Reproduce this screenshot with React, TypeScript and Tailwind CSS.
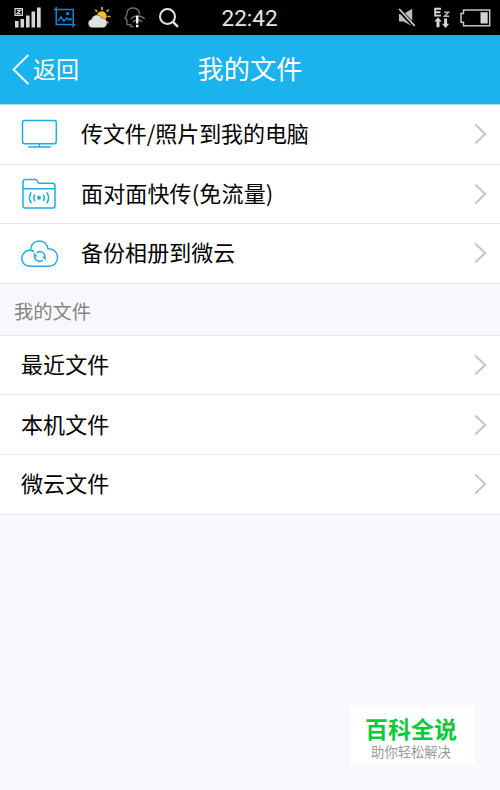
import React from 'react';

const ACCENT = '#1fabe3';

const SignalIcon = () => (
  <svg width="28" height="22" viewBox="0 0 28 22" fill="#d6d6d6">
    <path d="M1 1.6h7.4v6.8H1z" fill="none" stroke="#d6d6d6" strokeWidth="1.2" />
    <path d="M3 3.4h3.4L3 6.6h3.6" fill="none" stroke="#d6d6d6" strokeWidth="1.3" />
    <rect x="1" y="14" width="3.6" height="6.5" />
    <rect x="6.5" y="12" width="3.6" height="8.5" />
    <rect x="12" y="8.5" width="3.6" height="12" />
    <rect x="17.5" y="4.5" width="3.6" height="16" />
    <rect x="23" y="0.5" width="3.7" height="20" />
  </svg>
);

const ScreenshotIcon = () => (
  <svg width="22" height="22" viewBox="0 0 22 22" fill="none" stroke="#1387cf" strokeWidth="1.5">
    <path d="M2.2 0v17.4H21.5M0 2.5h19.2v18" />
    <path d="M4 13.7l3.2-3.8 2.6 4.2 3.2-3 1.8 1.7 1.8-1.3 1.2 1.6" />
    <circle cx="13.6" cy="6.6" r="1.7" fill="#1387cf" stroke="none" />
  </svg>
);

const WeatherIcon = () => (
  <svg width="24" height="22" viewBox="0 0 24 22">
    <g stroke="#e9b92f" strokeWidth="1.6">
      <path d="M14 0v3M7.3 2.7l2 2M20.7 2.7l-2.1 2M22.5 9.5h-3M20.4 16.2l-2-2" />
    </g>
    <circle cx="13.7" cy="9.3" r="5" fill="#f2be2b" />
    <path
      d="M4.4 20.8a4.3 4.3 0 0 1-.8-8.500 5.200 5.200 0 0 1 9.900-1.200 4.800 4.800 0 1 1 1.400 9.700z"
      fill="#e2e2e2"
      stroke="#000"
      strokeWidth="0.4"
    />
  </svg>
);

const HeadWifiIcon = () => (
  <svg width="24" height="22" viewBox="0 0 24 22" fill="none" stroke="#6e6e6e" strokeWidth="1.4">
    <path d="M15.5 7.5C15.3 3 12.3 1 9 1 5 1 2.9 3.3 2.9 6.8c0 1.5-.3 2.3-2 4.6l1.9 1v4.1c0 1.2.8 1.5 4 .9v2.2h3" />
    <path d="M6.8 12.2c3.2-4.2 10.8-4.2 13.8 0M9 15c2-2.6 7.3-2.6 9.3 0" />
    <path d="M13.2 8.8v7.8M13.2 17.8v2.4" stroke="#fff" strokeWidth="2.4" />
  </svg>
);

const SearchIcon = () => (
  <svg width="20" height="20" viewBox="0 0 20 20" fill="none" stroke="#e6e6e6" strokeWidth="2">
    <circle cx="8.5" cy="8.5" r="7.5" />
    <path d="M13.7 13.7l5.3 5.1" strokeWidth="2.4" />
  </svg>
);

const MuteIcon = () => (
  <svg width="18" height="20" viewBox="0 0 18 20" fill="#bdbdbd">
    <path d="M1 6h4.5L14.2 0.8v17.4L5.5 13.5H1z" />
    <path d="M0.5 1.3l16.2 17" stroke="#000" strokeWidth="4" />
    <path d="M1.2 1l15.6 17" stroke="#cfcfcf" strokeWidth="1.8" />
  </svg>
);

const DataIcon = () => (
  <svg width="18" height="22" viewBox="0 0 18 22" fill="#d6d6d6">
    <path d="M8 1.8H2.2v6.8H8M2.2 5.2h5.2" fill="none" stroke="#d6d6d6" strokeWidth="1.9" />
    <path d="M11.3 5.3h4.2l-4 4h4.6" fill="none" stroke="#b8b8b8" strokeWidth="1.5" />
    <path d="M5 10.3L8.6 14.6H6.5v5.7h-3v-5.7H1.3z" />
    <path d="M12.6 21L9 16.7h2.1v-5.2h3v5.2h2.1z" />
  </svg>
);

const BatteryIcon = () => (
  <svg width="31" height="18" viewBox="0 0 31 18">
    <path d="M3.5 1h26.2v15.7H3.5v-3.4H1V4.5h2.5z" fill="none" stroke="#c4c4c4" strokeWidth="1.5" />
    <rect x="20.5" y="3.2" width="7.2" height="11.3" fill="#d2d2d2" />
  </svg>
);

const MonitorIcon = () => (
  <svg width="38" height="30" viewBox="0 0 38 30" fill="none" stroke={ACCENT} strokeWidth="1.5">
    <rect x="2.5" y="1.6" width="33.8" height="23.2" rx="2.2" />
    <path d="M19.4 24.8v3M8.2 27.9h22.6" />
  </svg>
);

const FolderIcon = () => (
  <svg width="38" height="32" viewBox="0 0 38 32" fill="none" stroke={ACCENT} strokeWidth="1.5">
    <path d="M3 27.7V4.4Q3 1.6 5.6 1.6h9.5q1.6 0 2.3 1.5l.5 1q.5 1.1 1.8 1.1h12.700q2.600 0 2.600 2.600v19.900q0 2.400-2.400 2.400H5.400q-2.400 0-2.400-2.400zM3 10.700H35" />
    <circle cx="19" cy="19.8" r="2" fill={ACCENT} stroke="none" />
    <path d="M14.9 16.6q-2.200 3.200 0 6.400M23.100 16.600q2.200 3.200 0 6.400M11.300 14.400q-3.800 5.400 0 10.800M26.700 14.400q3.800 5.400 0 10.800" />
  </svg>
);

const CloudIcon = () => (
  <svg width="39" height="29" viewBox="0 0 39 29" fill="none" stroke={ACCENT} strokeWidth="1.5">
    <path d="M10.500 11.300C10.600 5.800 14.300 1.900 19.200 1.900C23.700 1.900 27.300 5 28 9.700C33.300 9.300 37.500 13.400 37.500 18.500C37.500 23.400 33.900 27.200 29.200 27.200H9.800C5.300 27.200 1.800 23.800 1.800 19.400C1.800 14.800 5.800 11 10.500 11.300Q12.700 11.600 13.900 12.800" />
    <path d="M16.600 13.700A5.300 5.300 0 0 1 25.100 17.600M22.800 21.200A5.300 5.300 0 0 1 14.400 17.300" />
    <path d="M13.700 13.400v4h4zM25.800 21.400v-4h-4z" fill={ACCENT} stroke="none" />
  </svg>
);

const Chevron = () => (
  <svg width="13" height="22" viewBox="0 0 13 22" fill="none" stroke="#c5c5c5" strokeWidth="2">
    <path d="M1.2 1.5l10 9.5-10 9.5" />
  </svg>
);

const actions = [
  { label: '传文件/照片到我的电脑', icon: <MonitorIcon />, tracking: 'tracking-[-0.08px]' },
  { label: '面对面快传(免流量)', icon: <FolderIcon />, tracking: 'tracking-[0.15px]' },
  { label: '备份相册到微云', icon: <CloudIcon />, tracking: 'tracking-[0.05px]' },
];

const folders = ['最近文件', '本机文件', '微云文件'];

type RowProps = {
  label: string;
  icon?: React.ReactNode;
  tracking?: string;
};

const Row = ({ label, icon, tracking = 'tracking-[0.1px]' }: RowProps) => (
  <li className="flex h-[59.6px] items-center border-b border-[#e5e6e8] bg-white pr-[13px] pl-[21px] text-[22px] text-black">
    {icon && <span className="-ml-px w-[61px] shrink-0">{icon}</span>}
    <span className={`flex-1 pb-1 whitespace-nowrap ${tracking}`}>{label}</span>
    <Chevron />
  </li>
);

const App: React.FC = () => {
  return (
    <div className="flex h-[790px] w-[500px] flex-col overflow-hidden bg-[#f7f8fb] font-['Noto_Sans_CJK_SC',sans-serif] leading-none">
      <div className="flex h-[35px] shrink-0 items-center bg-black pr-[9px] pl-3.5">
        <div className="flex w-[207.5px] items-center">
          <SignalIcon />
          <span className="ml-3"><ScreenshotIcon /></span>
          <span className="ml-3"><WeatherIcon /></span>
          <span className="ml-3"><HeadWifiIcon /></span>
          <span className="ml-[11px]"><SearchIcon /></span>
        </div>
        <span className="pt-px font-[Roboto,sans-serif] text-[22.5px] text-[#e6e6e6]">22:42</span>
        <div className="ml-auto flex items-center">
          <MuteIcon />
          <span className="ml-[17px]"><DataIcon /></span>
          <span className="ml-[9px]"><BatteryIcon /></span>
        </div>
      </div>

      <header className="grid h-[70px] shrink-0 grid-cols-3 items-center border-b border-[#a9dcf0] bg-[#1ab3ed] px-3 text-white">
        <button className="flex items-center text-[23px]">
          <svg className="mr-1" width="17" height="31" viewBox="0 0 17 31" fill="none" stroke="#fff" strokeWidth="1.8">
            <path d="M16.3 1L1.5 15.5l14.8 14.5" />
          </svg>
          <span className="pb-0.5">返回</span>
        </button>
        <h1 className="pb-0.5 text-center text-[26.2px]">我的文件</h1>
      </header>

      <ul>
        {actions.map((item) => (
          <Row key={item.label} {...item} />
        ))}
      </ul>
      <h2 className="flex h-[52px] shrink-0 items-center border-b border-[#e5e6e8] pt-1 pl-3.5 text-[19.3px] text-[#858585]">我的文件</h2>
      <ul>
        {folders.map((name) => (
          <Row key={name} label={name} />
        ))}
      </ul>

      <div className="mt-auto mr-[25px] mb-[25px] flex h-[60px] w-[125px] shrink-0 flex-col items-center self-end bg-white pt-[13px] pr-[3px] font-[Roboto,'Noto_Sans_CJK_SC',sans-serif]">
        <span className="text-[23px] leading-[26px] font-bold text-[#08cb38]">百科全说</span>
        <span className="text-[13.3px] leading-[17px] text-[#999]">助你轻松解决</span>
      </div>
    </div>
  );
};

export default App;
